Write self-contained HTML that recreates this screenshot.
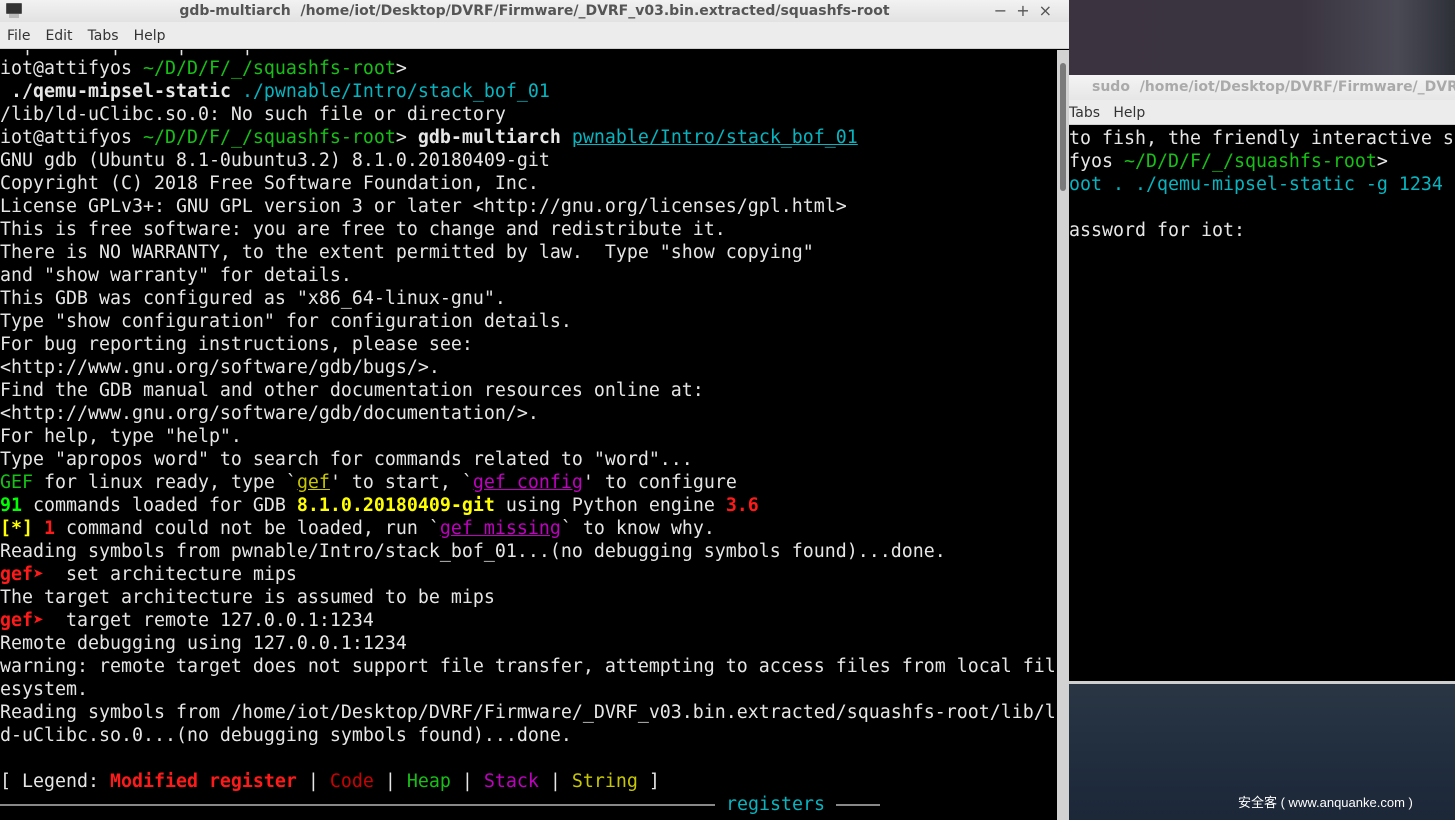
<!DOCTYPE html>
<html><head><meta charset="utf-8">
<style>
*{margin:0;padding:0;box-sizing:border-box}
body{width:1455px;height:820px;overflow:hidden;position:relative;background:#000;font-family:"DejaVu Sans","Liberation Sans",sans-serif}
.bgtop{position:absolute;left:1069px;top:0;width:386px;height:76px;background:linear-gradient(90deg,#3b3440 0%,#3a3440 60%,#4a4a55 85%,#2e3038 100%)}
.bgbot{position:absolute;left:1069px;top:684px;width:386px;height:136px;background:linear-gradient(180deg,#2b3644 0%,#223040 40%,#1c2738 100%)}
.wm{position:absolute;left:1238px;top:792px;color:#fff;font-size:13px;font-family:"Liberation Sans","Noto Sans CJK SC",sans-serif;white-space:nowrap}
.title{position:absolute;left:0;top:0;width:1069px;height:22px;background:linear-gradient(#f2f2f2,#e2e2e2);font-weight:bold;font-size:14px;color:#555;text-align:center;line-height:22px;white-space:nowrap}
.menu{position:absolute;left:0;top:22px;width:1069px;height:27px;background:#ececec;border-bottom:1px solid #cfcfcf;font-size:14px;color:#333;line-height:28px}
.menu span{margin-left:7px;margin-right:8px}
.ctrl{position:absolute;right:8px;top:0;font-size:16px;color:#555;font-weight:normal;letter-spacing:9px}
.icon{position:absolute;left:6px;top:3px;width:16px;height:11px;background:#333;border:1px solid #555;border-radius:1px}
.icon2{position:absolute;left:9px;top:14px;width:10px;height:4px;background:#bbb}
.term{position:absolute;left:0;top:50px;width:1057px;height:770px;background:#000;overflow:hidden}
pre{font-family:"DejaVu Sans Mono",monospace;font-size:18.27px;line-height:23px;color:#e6e6e6;white-space:pre}
.t1{position:absolute;left:0;top:-16.5px}
.g{color:#17c017}.c{color:#06b5c0}.b{font-weight:bold}
.y{color:#c8c800}.Y{color:#ffff00;font-weight:bold}.G{color:#00ff00;font-weight:bold}
.r{color:#ff1a1a}.R{color:#ff1a1a;font-weight:bold}.dr{color:#cc0000}.m{color:#c000c0}.u{text-decoration:underline}
.sb{position:absolute;left:1057px;top:50px;width:12px;height:770px;background:#d2d2d2}
.th{position:absolute;left:1060px;top:63px;width:6px;height:128px;background:#7a7a7a;border-radius:3px}
.rt{position:absolute;left:1069px;top:75px;width:386px;height:25px;overflow:hidden;background:linear-gradient(#f4f4f4,#e6e6e6);font-weight:bold;font-size:14px;color:#aaa;line-height:25px;padding-left:23px;white-space:nowrap}
.rm{position:absolute;left:1069px;top:100px;width:386px;height:25px;overflow:hidden;background:#ececec;border-bottom:1px solid #cfcfcf;font-size:14px;color:#333;line-height:26px;white-space:nowrap}
.rterm{position:absolute;left:1069px;top:125px;width:386px;height:556px;background:#000;overflow:hidden}
.rterm pre{position:absolute;left:0;top:2px}
.rsep{position:absolute;left:1069px;top:681px;width:386px;height:3px;background:#cfcfcf}
.hl{display:inline-block;vertical-align:middle;height:2px;background:#888}
</style></head><body>
<div class="bgtop"></div>
<div class="bgbot"></div>
<div class="wm">安全客 ( www.anquanke.com )</div>

<div class="title"><div class="icon"></div><div class="icon2"></div>gdb-multiarch&nbsp; /home/iot/Desktop/DVRF/Firmware/_DVRF_v03.bin.extracted/squashfs-root<span class="ctrl">−+×</span></div>
<div class="menu"><span>File</span><span>Edit</span><span>Tabs</span><span>Help</span></div>

<div class="term"><pre class="t1">  |       |     |     |
iot@attifyos <span class="g">~/D/D/F/_/squashfs-root</span>>
 <span class="b">./qemu-mipsel-static</span> <span class="c">./pwnable/Intro/stack_bof_01</span>
/lib/ld-uClibc.so.0: No such file or directory
iot@attifyos <span class="g">~/D/D/F/_/squashfs-root</span>> <span class="b">gdb-multiarch</span> <span class="c u">pwnable/Intro/stack_bof_01</span>
GNU gdb (Ubuntu 8.1-0ubuntu3.2) 8.1.0.20180409-git
Copyright (C) 2018 Free Software Foundation, Inc.
License GPLv3+: GNU GPL version 3 or later &lt;http://gnu.org/licenses/gpl.html>
This is free software: you are free to change and redistribute it.
There is NO WARRANTY, to the extent permitted by law.  Type "show copying"
and "show warranty" for details.
This GDB was configured as "x86_64-linux-gnu".
Type "show configuration" for configuration details.
For bug reporting instructions, please see:
&lt;http://www.gnu.org/software/gdb/bugs/>.
Find the GDB manual and other documentation resources online at:
&lt;http://www.gnu.org/software/gdb/documentation/>.
For help, type "help".
Type "apropos word" to search for commands related to "word"...
<span class="g">GEF</span> for linux ready, type `<span class="y u">gef</span>' to start, `<span class="m u">gef config</span>' to configure
<span class="G">91</span> commands loaded for GDB <span class="Y">8.1.0.20180409-git</span> using Python engine <span class="R">3.6</span>
<span class="Y">[*]</span> <span class="R">1</span> command could not be loaded, run `<span class="m u">gef missing</span>` to know why.
Reading symbols from pwnable/Intro/stack_bof_01...(no debugging symbols found)...done.
<span class="R">gef➤</span>  set architecture mips
The target architecture is assumed to be mips
<span class="R">gef➤</span>  target remote 127.0.0.1:1234
Remote debugging using 127.0.0.1:1234
warning: remote target does not support file transfer, attempting to access files from local fil
esystem.
Reading symbols from /home/iot/Desktop/DVRF/Firmware/_DVRF_v03.bin.extracted/squashfs-root/lib/l
d-uClibc.so.0...(no debugging symbols found)...done.

[ Legend: <span class="R">Modified register</span> | <span class="dr">Code</span> | <span class="g">Heap</span> | <span class="m">Stack</span> | <span class="y">String</span> ]
<span class="hl" style="width:715px"></span> <span class="c">registers</span> <span class="hl" style="width:44px"></span>
</pre></div>
<div class="sb"></div><div class="th"></div>

<div class="rt">sudo&nbsp; /home/iot/Desktop/DVRF/Firmware/_DVRF_v03.bin.extracted</div>
<div class="rm">Tabs&nbsp;&nbsp;&nbsp;Help</div>
<div class="rterm"><pre>to fish, the friendly interactive shell
fyos <span class="g">~/D/D/F/_/squashfs-root</span>>
<span class="c">oot . ./qemu-mipsel-static -g 1234</span>

assword for iot:</pre></div>
<div class="rsep"></div>
</body></html>
